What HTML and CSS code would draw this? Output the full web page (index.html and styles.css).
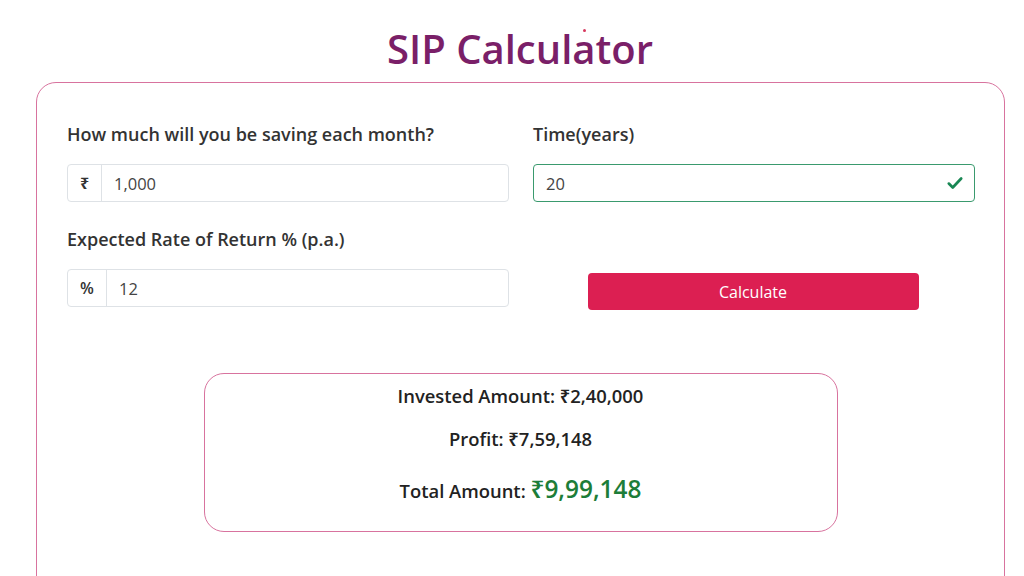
FILE: index.html
```html
<!DOCTYPE html>
<html>
<head>
<meta charset="utf-8">
<link rel="stylesheet" href="styles.css">
</head>
<body>
<h1 class="title">SIP Calcul<span class="dot-a">a</span>tor</h1>
<div class="card">
  <div class="grid">
    <div class="field">
      <label class="label">How much will you be saving each month?</label>
      <div class="group">
        <span class="prefix">₹</span>
        <span class="input">1,000</span>
      </div>
    </div>
    <div class="field">
      <label class="label">Time(years)</label>
      <div class="group valid">
        <span class="input">20</span>
        <svg class="check" viewBox="0 0 16 16" width="18" height="18"><path d="M2.5 8.5 L6 12 L13.5 4" fill="none" stroke="#198754" stroke-width="2.4" stroke-linecap="round" stroke-linejoin="round"/></svg>
      </div>
    </div>
    <div class="field">
      <label class="label">Expected Rate of Return % (p.a.)</label>
      <div class="group">
        <span class="prefix wide">%</span>
        <span class="input">12</span>
      </div>
    </div>
    <div class="field btn-field">
      <button class="btn">Calculate</button>
    </div>
  </div>
  <div class="results">
    <p class="line">Invested Amount: ₹2,40,000</p>
    <p class="line">Profit: ₹7,59,148</p>
    <p class="line total">Total Amount: <span class="total-val">₹9,99,148</span></p>
  </div>
</div>
</body>
</html>
```
FILE: styles.css
```css
* { box-sizing: border-box; }
html, body { margin: 0; padding: 0; background: #fff; }
body {
  font-family: "Open Sans", "Noto Sans", sans-serif;
  color: #333;
  width: 1024px;
  height: 576px;
  overflow: hidden;
}
.title {
  margin: 24px 0 0 0;
  height: 58px;
  text-align: center;
  padding-left: 16px;
  font-size: 40px;
  font-weight: 600;
  line-height: 50px;
  color: #7a1f68;
}
.dot-a { position: relative; }
.dot-a::before {
  content: "";
  position: absolute;
  left: 50%;
  top: 8px;
  width: 3px;
  height: 3px;
  margin-left: -1px;
  border-radius: 50%;
  background: #d7385e;
}
.card {
  margin-left: 36px;
  width: 969px;
  height: 520px;
  border: 1.5px solid #d8739e;
  border-radius: 20px;
  padding: 38px 30px 0 30px;
}
.grid {
  display: grid;
  grid-template-columns: 442px 442px;
  column-gap: 24px;
  row-gap: 24px;
}
.field { display: flex; flex-direction: column; }
.label {
  font-size: 18px;
  font-weight: 600;
  color: #333;
  line-height: 26px;
  margin-bottom: 17px;
}
.group {
  display: flex;
  height: 38px;
  border: 1px solid #dee2e6;
  border-radius: 4px;
  align-items: center;
}
.prefix {
  width: 34px;
  height: 100%;
  display: flex;
  align-items: center;
  justify-content: center;
  border-right: 1px solid #dee2e6;
  font-size: 16px;
  font-weight: 700;
  color: #333;
}
.prefix.wide { width: 39px; font-weight: 600; }
.input {
  flex: 1;
  padding-left: 12px;
  font-size: 16.5px;
  color: #444;
}
.group.valid { border-color: #3a9a6e; }
.check { margin-right: 10px; }
.btn-field { align-items: center; justify-content: flex-end; padding-right: 2px; }
.btn {
  width: 331px;
  height: 37px;
  margin-bottom: -3px;
  background: #dc1f52;
  color: #fff;
  border: none;
  border-radius: 4px;
  font-family: "Open Sans", "Noto Sans", sans-serif;
  font-size: 16px;
}
.results {
  width: 634px;
  margin: 66px auto 0 auto;
  height: 159px;
  border: 1.5px solid #d8739e;
  border-radius: 20px;
  padding-top: 10px;
  text-align: center;
}
.line {
  margin: 0;
  font-size: 18.4px;
  font-weight: 600;
  color: #222;
  line-height: 24px;
  margin-bottom: 19px;
}
.line.total { margin-top: 26px; }
.total-val {
  color: #1d7d38;
  font-size: 24.4px;
  font-weight: 600;
}
```
